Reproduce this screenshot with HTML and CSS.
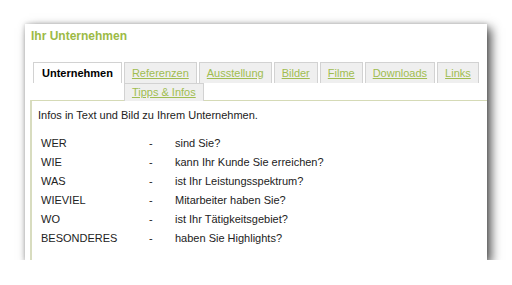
FILE: index.html
```html
<!DOCTYPE html>
<html lang="de">
<head>
<meta charset="utf-8">
<title>Ihr Unternehmen</title>
<link rel="stylesheet" href="styles.css">
</head>
<body>
<div class="card">
  <h1 class="title">Ihr Unternehmen</h1>
  <ul class="tabs">
    <li class="tab active">Unternehmen</li>
    <li class="tab"><a href="#">Referenzen</a></li>
    <li class="tab"><a href="#">Ausstellung</a></li>
    <li class="tab"><a href="#">Bilder</a></li>
    <li class="tab"><a href="#">Filme</a></li>
    <li class="tab"><a href="#">Downloads</a></li>
    <li class="tab"><a href="#">Links</a></li>
    <li class="tab low"><a href="#">Tipps &amp; Infos</a></li>
  </ul>
  <div class="panel">
    <p class="intro">Infos in Text und Bild zu Ihrem Unternehmen.</p>
    <div class="qa">
      <span>WER</span><span>-</span><span>sind Sie?</span>
      <span>WIE</span><span>-</span><span>kann Ihr Kunde Sie erreichen?</span>
      <span>WAS</span><span>-</span><span>ist Ihr Leistungsspektrum?</span>
      <span>WIEVIEL</span><span>-</span><span>Mitarbeiter haben Sie?</span>
      <span>WO</span><span>-</span><span>ist Ihr Tätigkeitsgebiet?</span>
      <span>BESONDERES</span><span>-</span><span>haben Sie Highlights?</span>
    </div>
  </div>
</div>
</body>
</html>
```

FILE: styles.css
```css
html, body {
  margin: 0;
  padding: 0;
  background: #ffffff;
}
body {
  font-family: "Liberation Sans", Arial, sans-serif;
  font-size: 11px;
  color: #222222;
}
.card {
  margin: 24px 0 0 25px;
  width: 462px;
  height: 236px;
  box-sizing: border-box;
  padding-top: 5px;
  background: #ffffff;
  box-shadow: 4px 4px 10px rgba(0, 0, 0, 0.7), 0 0 4px rgba(0, 0, 0, 0.18);
  overflow: hidden;
  display: flex;
  flex-direction: column;
}
.title {
  margin: 0 0 0 6px;
  font-size: 12px;
  line-height: 14px;
  font-weight: bold;
  color: #9cba45;
}
.tabs {
  list-style: none;
  margin: 19px 0 0 8px;
  padding: 0;
  height: 38px;
  flex: none;
  z-index: 1;
}
.tab {
  float: left;
  height: 20px;
  line-height: 20px;
  padding: 0 7px;
  margin-right: 2px;
  border: 1px solid #d2d2d2;
  border-bottom: none;
  background: #efefef;
  white-space: nowrap;
}
.tab a {
  color: #a0bd50;
  text-decoration: underline;
}
.tab.active {
  background: #ffffff;
  color: #000000;
  font-weight: bold;
  padding: 0 8px;
  margin-bottom: 17px;
}
.tab.low {
  height: 17px;
  line-height: 16px;
}
.panel {
  flex: 1;
  margin: 0 -6px 0 5px;
  border-top: 1px solid #d5dab6;
  border-left: 2px solid #d8dcbf;
  padding: 5px 0 0 6px;
  background: #ffffff;
}
.intro {
  margin: 0 0 9px 0;
  line-height: 19px;
}
.qa {
  display: grid;
  grid-template-columns: 108px 26px auto;
  grid-auto-rows: 19px;
  line-height: 19px;
  padding-left: 3px;
}
```
